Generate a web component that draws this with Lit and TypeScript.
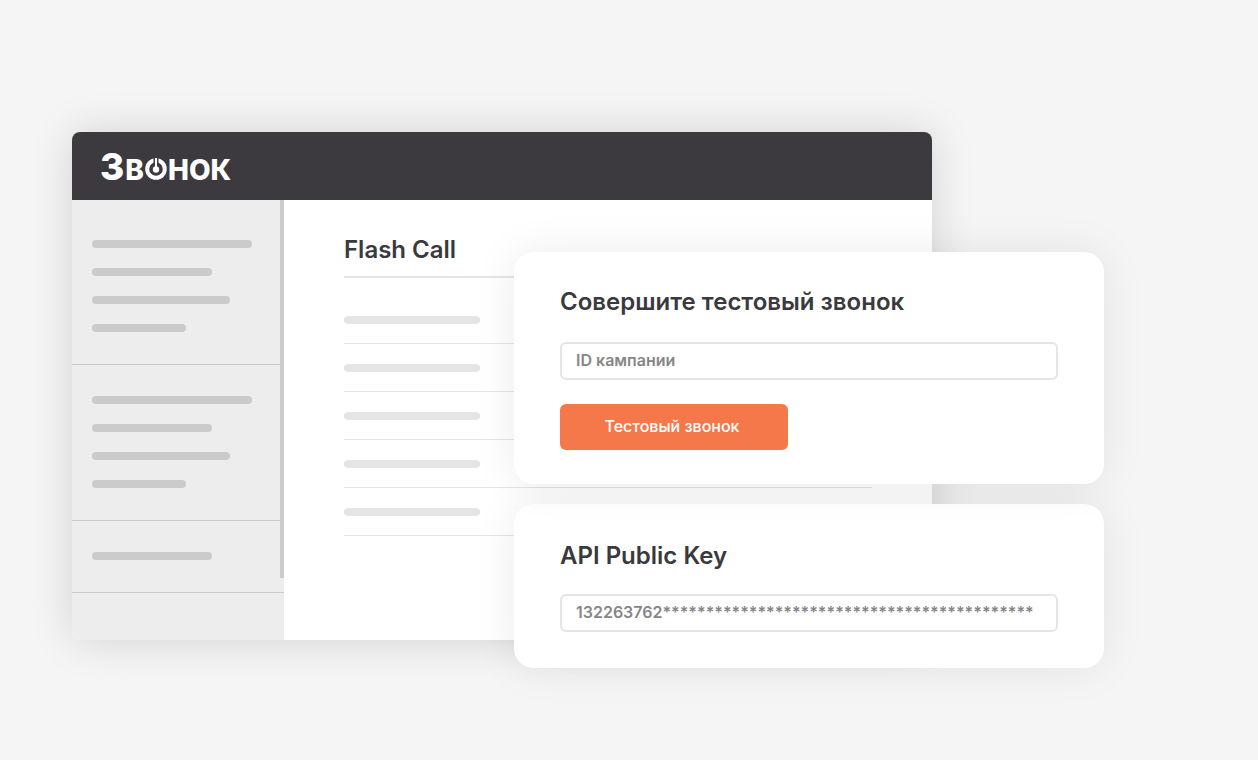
import { LitElement, html, css } from "lit";
import { customElement } from "lit/decorators.js";
import { styleMap } from "lit/directives/style-map.js";

const SIDEBAR_SECTIONS: number[][] = [
  [160, 120, 138, 94],
  [160, 120, 138, 94],
  [120],
];
const ROWS = [136, 136, 136, 136, 136];

const bar = (width: number) =>
  html`<span class="bar" style=${styleMap({ width: `${width}px` })}></span>`;

@customElement("app-root")
export class AppRoot extends LitElement {
  static styles = css`
    :host {
      display: block;
      box-sizing: border-box;
      min-height: 100vh;
      padding: 132px 154px 92px 72px;
      background: #f5f5f5;
      color: #3a393d;
      font-family: Inter, "Liberation Sans", sans-serif;
    }
    .stage {
      position: relative;
    }
    .window {
      margin-right: 172px;
      border-radius: 8px;
      overflow: hidden;
      background: #fff;
      box-shadow: 0 0 44px rgba(0, 0, 0, 0.14);
    }
    .header {
      display: flex;
      align-items: center;
      box-sizing: border-box;
      height: 68px;
      padding: 4px 28px 0;
      background: #3d3a3f;
    }
    .logo {
      display: flex;
      align-items: baseline;
      gap: 1px;
      color: #fff;
      font-weight: 800;
      font-size: 28px;
      line-height: 40px;
      text-decoration: none;
      text-transform: uppercase;
    }
    .logo-initial {
      font-size: 37px;
    }
    .logo-mark {
      width: 22px;
      height: 22px;
    }
    .body {
      display: flex;
      min-height: 440px;
    }
    .sidebar {
      position: relative;
      flex: none;
      box-sizing: border-box;
      width: 212px;
      padding-top: 9px;
      background: #ededed;
    }
    .section {
      display: flex;
      flex-direction: column;
      gap: 20px;
      padding: 31px 20px 32px;
      border-bottom: 1px solid #cacaca;
    }
    .scrollbar {
      position: absolute;
      top: 0;
      right: 0;
      width: 4px;
      height: 378px;
      background: #cbcbcb;
    }
    .bar {
      display: block;
      height: 8px;
      border-radius: 4px;
      background: #cbcbcb;
    }
    .main {
      flex: 1;
      min-width: 0;
      padding: 34px 60px;
    }
    .title {
      margin: 0;
      font-size: 24px;
      font-weight: 600;
      line-height: 32px;
    }
    .main .title {
      padding-bottom: 10px;
      border-bottom: 2px solid #e5e5e5;
    }
    .rows {
      margin: 18px 0 0;
      padding: 0;
      list-style: none;
    }
    .row {
      padding: 20px 0 19px;
      border-bottom: 1px solid #e5e5e5;
    }
    .row .bar {
      background: #e5e5e5;
    }
    .cards {
      position: absolute;
      top: 120px;
      right: 0;
      width: 590px;
      display: flex;
      flex-direction: column;
      gap: 20px;
    }
    .card {
      display: flex;
      flex-direction: column;
      align-items: flex-start;
      gap: 24px;
      padding: 34px 46px;
      border-radius: 20px;
      background: #fff;
      box-shadow: 0 0 44px rgba(0, 0, 0, 0.08);
    }
    .card.call {
      z-index: 1;
    }
    .card.key {
      gap: 22px;
      padding: 36px 46px;
    }
    .field {
      box-sizing: border-box;
      width: 100%;
      height: 38px;
      margin: 0;
      padding: 0 14px 2px;
      border: 2px solid #e5e5e5;
      border-radius: 6px;
      background: #fff;
      color: #868686;
      font: 600 16px/20px Inter, "Liberation Sans", sans-serif;
      outline: none;
    }
    .field::placeholder {
      color: #868686;
      opacity: 1;
    }
    .submit {
      width: 228px;
      height: 46px;
      padding: 0 4px 2px 0;
      border: 0;
      border-radius: 6px;
      background: #f5784b;
      color: #fff;
      font: 500 16px/20px Inter, "Liberation Sans", sans-serif;
      cursor: pointer;
    }
  `;

  render() {
    return html`
      <div class="stage">
        <div class="window">
          <header class="header">
            <a class="logo" href="#">
              <span class="logo-initial">З</span><span>в</span
              ><svg class="logo-mark" viewBox="0 0 22 22" role="img" aria-label="о">
                <circle cx="11" cy="11" r="8.8" fill="none" stroke="#fff" stroke-width="4" />
                <path d="M11 0V11" stroke="#3d3a3f" stroke-width="5" />
                <path d="M11 0V11" stroke="#fff" stroke-width="2" />
                <circle cx="11" cy="11.5" r="3.2" fill="#fff" />
              </svg><span>нок</span>
            </a>
          </header>
          <div class="body">
            <nav class="sidebar">
              ${SIDEBAR_SECTIONS.map(
                (widths) => html`<div class="section">${widths.map(bar)}</div>`
              )}
              <div class="scrollbar"></div>
            </nav>
            <main class="main">
              <h1 class="title">Flash Call</h1>
              <ul class="rows">
                ${ROWS.map((width) => html`<li class="row">${bar(width)}</li>`)}
              </ul>
            </main>
          </div>
        </div>
        <div class="cards">
          <form class="card call" @submit=${(e: Event) => e.preventDefault()}>
            <h2 class="title">Совершите тестовый звонок</h2>
            <input class="field" type="text" placeholder="ID кампании" aria-label="ID кампании" />
            <button class="submit" type="submit">Тестовый звонок</button>
          </form>
          <section class="card key">
            <h2 class="title"><label for="api-key">API Public Key</label></h2>
            <input
              class="field"
              id="api-key"
              type="text"
              readonly
              .value=${"132263762" + "*".repeat(43)}
            />
          </section>
        </div>
      </div>
    `;
  }
}
